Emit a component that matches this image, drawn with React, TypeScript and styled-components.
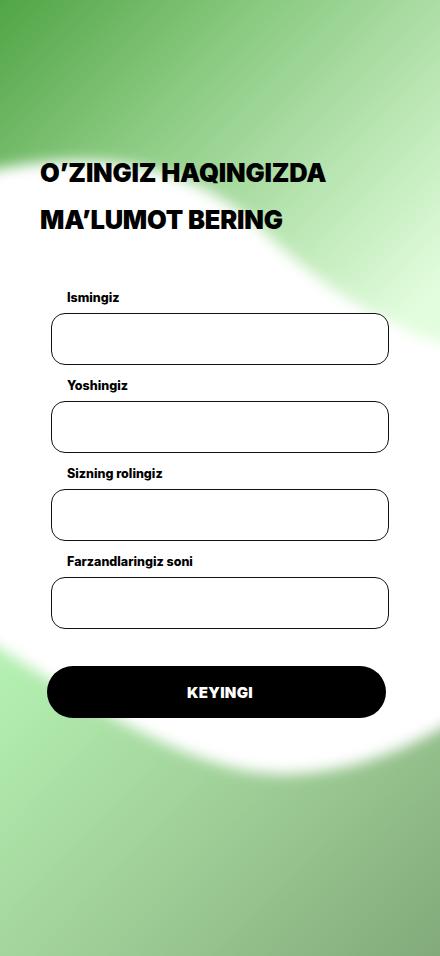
import styled, { createGlobalStyle } from 'styled-components';

const GlobalStyle = createGlobalStyle`
  html, body {
    margin: 0;
    padding: 0;
    background: #ffffff;
  }
  * {
    box-sizing: border-box;
  }
`;

const fields = ['Ismingiz', 'Yoshingiz', 'Sizning rolingiz', 'Farzandlaringiz soni'];

// blurred green blobs behind the form
const Backdrop = () => (
  <BackdropSvg viewBox="0 0 440 956" preserveAspectRatio="none">
    <defs>
      <linearGradient id="topGreen" x1="0" y1="0" x2="1" y2="0.75">
        <stop offset="0" stopColor="#449c38" />
        <stop offset="0.45" stopColor="#8fcd86" />
        <stop offset="1" stopColor="#e2fddd" />
      </linearGradient>
      <linearGradient id="bottomGreen" x1="0" y1="0.2" x2="1" y2="0.9">
        <stop offset="0" stopColor="#b4f0b1" />
        <stop offset="0.5" stopColor="#9ecd96" />
        <stop offset="1" stopColor="#80a778" />
      </linearGradient>
      <filter id="soft" x="-10%" y="-10%" width="120%" height="120%">
        <feGaussianBlur stdDeviation="7" />
      </filter>
    </defs>
    <path
      d="M-30 -30 H470 V350 C 400 335, 330 295, 265 232 C 200 172, 110 140, -30 175 Z"
      fill="url(#topGreen)"
      filter="url(#soft)"
    />
    <path
      d="M-30 630 C 70 690, 190 778, 290 774 C 360 771, 410 748, 470 712 V990 H-30 Z"
      fill="url(#bottomGreen)"
      filter="url(#soft)"
    />
  </BackdropSvg>
);

const App = () => {
  return (
    <>
      <GlobalStyle />
      <Screen>
        <Backdrop />
        <Content>
          <Title>
            O’ZINGIZ HAQINGIZDA
            <br />
            MA’LUMOT BERING
          </Title>
          <Form onSubmit={(e) => e.preventDefault()}>
            {fields.map((label) => (
              <Field key={label}>
                <Label>{label}</Label>
                <Input type="text" />
              </Field>
            ))}
            <NextButton type="submit">KEYINGI</NextButton>
          </Form>
        </Content>
      </Screen>
    </>
  );
};

const Screen = styled.div`
  position: relative;
  width: 440px;
  min-height: 956px;
  overflow: hidden;
  background: #ffffff;
  font-family: Inter, 'Noto Sans', 'Liberation Sans', sans-serif;
`;

const BackdropSvg = styled.svg`
  position: absolute;
  inset: 0;
  width: 100%;
  height: 100%;
  z-index: 0;
`;

const Content = styled.div`
  position: relative;
  z-index: 1;
  padding: 149px 0 0 0;
  display: flex;
  flex-direction: column;
`;

const Title = styled.h1`
  margin: 0 0 47px 40px;
  font-size: 25.5px;
  line-height: 47px;
  font-weight: 900;
  letter-spacing: -0.2px;
  color: #000000;
`;

const Form = styled.form`
  display: flex;
  flex-direction: column;
  gap: 13px;
  padding: 0 51px;
`;

const Field = styled.div`
  display: flex;
  flex-direction: column;
  gap: 7px;
`;

const Label = styled.label`
  padding-left: 16px;
  font-size: 12.5px;
  line-height: 16px;
  font-weight: 800;
  color: #000000;
`;

const Input = styled.input`
  width: 338px;
  height: 52px;
  border: 1px solid #111111;
  border-radius: 14px;
  background: #ffffff;
  padding: 0 16px;
  font-family: inherit;
  font-size: 15px;
  outline: none;
`;

const NextButton = styled.button`
  margin: 24px 0 0 -4px;
  width: 339px;
  height: 52px;
  border: none;
  border-radius: 26px;
  padding: 0 0 0 7px;
  background: #000000;
  color: #ffffff;
  font-family: inherit;
  font-size: 15px;
  font-weight: 900;
  letter-spacing: 0.3px;
  cursor: pointer;
`;

export default App;
